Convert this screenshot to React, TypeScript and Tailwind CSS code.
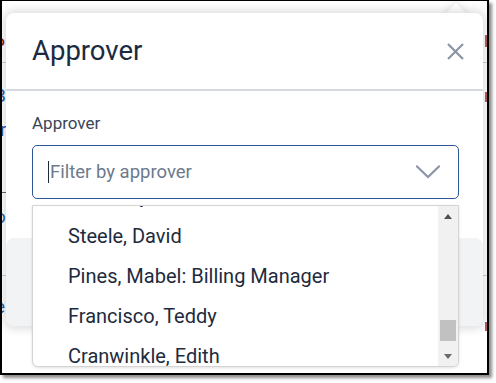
import React from "react";

function Chevron() {
  return (
    <svg width="24" height="14" viewBox="0 0 24 14" fill="none">
      <polyline points="1,1.5 12,12 23,1.5" stroke="#8b95a6" strokeWidth="2.2" strokeLinecap="square" />
    </svg>
  );
}

function CloseX() {
  return (
    <svg width="17" height="17" viewBox="0 0 17 17" fill="none">
      <line x1="1" y1="1" x2="16" y2="16" stroke="#8a94a3" strokeWidth="2.2" />
      <line x1="16" y1="1" x2="1" y2="16" stroke="#8a94a3" strokeWidth="2.2" />
    </svg>
  );
}

const items = [
  "Corduroy, Wendell",
  "Steele, David",
  "Pines, Mabel: Billing Manager",
  "Francisco, Teddy",
  "Cranwinkle, Edith",
];

export default function App() {
  return (
    <div className="w-[496px] h-[383px] bg-white font-['Roboto','Liberation_Sans',sans-serif]">
      <div className="relative w-[489px] h-[375px] border-black border-l-2 border-t border-r-2 border-b-2 bg-white shadow-[3px_3px_3px_rgba(0,0,0,0.45)] overflow-hidden">
        {/* background page slivers */}
        <div className="absolute left-0 top-[34px] w-[4px] h-[20px] overflow-hidden text-[19px] leading-[20px] text-[#7a1f2b]">
          <span className="block -ml-[9px]">P</span>
        </div>
        <div className="absolute left-0 top-[61px] w-[4px] h-px bg-[#d2d2d2]" />
        <div className="absolute left-0 top-[85px] w-[4px] h-[20px] overflow-hidden text-[19px] leading-[20px] text-[#2c5fa6]">
          <span className="block -ml-[8px]">B</span>
        </div>
        <div className="absolute left-0 top-[119px] w-[4px] h-[20px] overflow-hidden text-[19px] leading-[20px] text-[#2c5fa6]">
          <span className="block -ml-[2px]">r</span>
        </div>
        <div className="absolute left-0 top-[191px] w-[4px] h-px bg-[#666]" />
        <div className="absolute left-0 top-[206px] w-[4px] h-[20px] overflow-hidden text-[19px] leading-[20px] text-[#2c5fa6]">
          <span className="block -ml-[7px]">o</span>
        </div>
        <div className="absolute left-0 top-[274px] w-[4px] h-px bg-[#cfcfcf]" />
        <div className="absolute left-0 top-[296px] w-[4px] h-[20px] overflow-hidden text-[19px] leading-[20px] text-[#2c5fa6]">
          <span className="block -ml-[7px]">e</span>
        </div>
        <div className="absolute left-[483px] top-[34px] w-[2px] h-[12px] bg-[#b85a5a]" />
        <div className="absolute left-[481px] top-[61px] w-[4px] h-px bg-[#cfcfcf]" />
        <div className="absolute left-[483px] top-[91px] w-[2px] h-[10px] bg-[#b85a5a]" />
        <div className="absolute left-[481px] top-[274px] w-[4px] h-px bg-[#cfcfcf]" />
        <div className="absolute left-[483px] top-[321px] w-[2px] h-[9px] bg-[#b85a5a]" />

        {/* popover arrow */}
        <div className="absolute right-[24px] top-[5px] w-[14px] h-[14px] rotate-45 bg-white shadow-[0_0_6px_2px_rgba(0,0,0,0.08)]" />

        {/* modal */}
        <div className="absolute left-[4px] top-[12px] w-[477px] h-[313px] rounded-[8px] bg-white shadow-[0_0_10px_3px_rgba(0,0,0,0.13)] flex flex-col">
          <div className="h-[78px] shrink-0 border-b-2 border-[#d6dae0] flex items-center justify-between pl-[26px] pr-[19px]">
            <h2 className="text-[27.5px] leading-none font-normal text-[#1c2a40]">Approver</h2>
            <CloseX />
          </div>
          <div className="h-[147px] shrink-0 pl-[26px] pr-[24px] pt-[22px]">
            <div className="text-[17px] leading-[20px] text-[#3a4657]">Approver</div>
            <div className="relative mt-[12px]">
              <div className="h-[54px] border-[1.5px] border-[#2d5696] rounded-[5px] flex items-center justify-between pl-[15px] pr-[18px] bg-white">
                <div className="flex items-center">
                  <div className="w-px h-[22px] bg-[#1f2937]" />
                  <span className="ml-px text-[18.5px] text-[#6c7a8c] leading-none">Filter by approver</span>
                </div>
                <Chevron />
              </div>
              <div className="absolute left-0 top-[60px] w-[427px] h-[162px] z-10 bg-white border border-[#d4d4d4] rounded-b-[6px] flex overflow-hidden shadow-[0_1px_3px_rgba(0,0,0,0.12)]">
                <div className="flex-1 overflow-hidden pl-[35px] flex flex-col">
                  <div className="-mt-[30px] flex flex-col">
                    {items.map((t) => (
                      <div key={t} className="h-[40px] leading-[40px] text-[20px] text-[#1e2b3d] whitespace-nowrap">
                        {t}
                      </div>
                    ))}
                  </div>
                </div>
                <div className="w-[20px] bg-[#f1f1f1] flex flex-col items-center">
                  <div className="h-[17px] w-full flex items-center justify-center pt-[3px]">
                    <div className="w-0 h-0 border-x-[4px] border-x-transparent border-b-[5px] border-b-[#505050]" />
                  </div>
                  <div className="flex-1 w-full flex flex-col items-center">
                    <div className="mt-[97px] w-[16px] h-[21px] bg-[#c1c1c1]" />
                  </div>
                  <div className="h-[17px] w-full flex items-center justify-center pb-[3px]">
                    <div className="w-0 h-0 border-x-[4px] border-x-transparent border-t-[5px] border-t-[#6a6a6a]" />
                  </div>
                </div>
              </div>
            </div>
          </div>
          <div className="flex-1 bg-[#f2f3f5] rounded-[8px]" />
        </div>
      </div>
    </div>
  );
}
